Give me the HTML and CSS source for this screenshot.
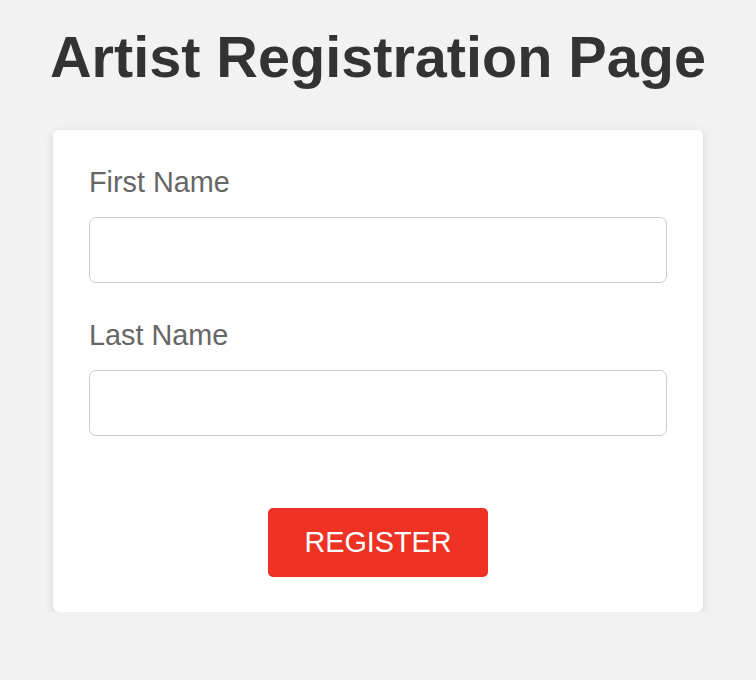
FILE: index.html
```html
<!DOCTYPE html>
<html>
<head>
<meta charset="utf-8">
<link rel="stylesheet" href="styles.css">
</head>
<body>
<h1 class="title">Artist Registration Page</h1>
<form class="card">
  <div class="field">
    <label class="label" for="first">First Name</label>
    <input class="input" id="first" type="text">
  </div>
  <div class="field">
    <label class="label" for="last">Last Name</label>
    <input class="input" id="last" type="text">
  </div>
  <div class="actions">
    <button class="btn" type="button">REGISTER</button>
  </div>
</form>
</body>
</html>
```
FILE: styles.css
```css
html, body {
  margin: 0;
  padding: 0;
  background: #f2f2f2;
  font-family: "Liberation Sans", Arial, sans-serif;
}
.title {
  margin: 24px 0 40px;
  text-align: center;
  font-size: 57.6px;
  font-weight: bold;
  color: #333333;
  line-height: 66px;
}
.card {
  width: 650px;
  box-sizing: border-box;
  margin: 0 auto;
  background: #ffffff;
  border-radius: 6px;
  box-shadow: 0 2px 10px rgba(0, 0, 0, 0.12);
  padding: 36px 36px 35px;
  display: flex;
  flex-direction: column;
}
.field {
  display: flex;
  flex-direction: column;
  margin-bottom: 36px;
}
.field + .field {
  margin-bottom: 0;
}
.label {
  font-size: 28.8px;
  color: #666666;
  line-height: 33px;
  margin-bottom: 18px;
}
.input {
  box-sizing: border-box;
  width: 100%;
  height: 66px;
  border: 1px solid #cccccc;
  border-radius: 7px;
  background: #ffffff;
  font-size: 28px;
  padding: 0 12px;
  margin: 0;
  outline: none;
}
.actions {
  display: flex;
  justify-content: center;
  margin-top: 72px;
}
.btn {
  width: 220px;
  height: 69px;
  border: none;
  border-radius: 5px;
  background: #ee3224;
  color: #ffffff;
  font-family: "Liberation Sans", Arial, sans-serif;
  font-size: 28.8px;
  padding: 0;
  cursor: pointer;
}
```
